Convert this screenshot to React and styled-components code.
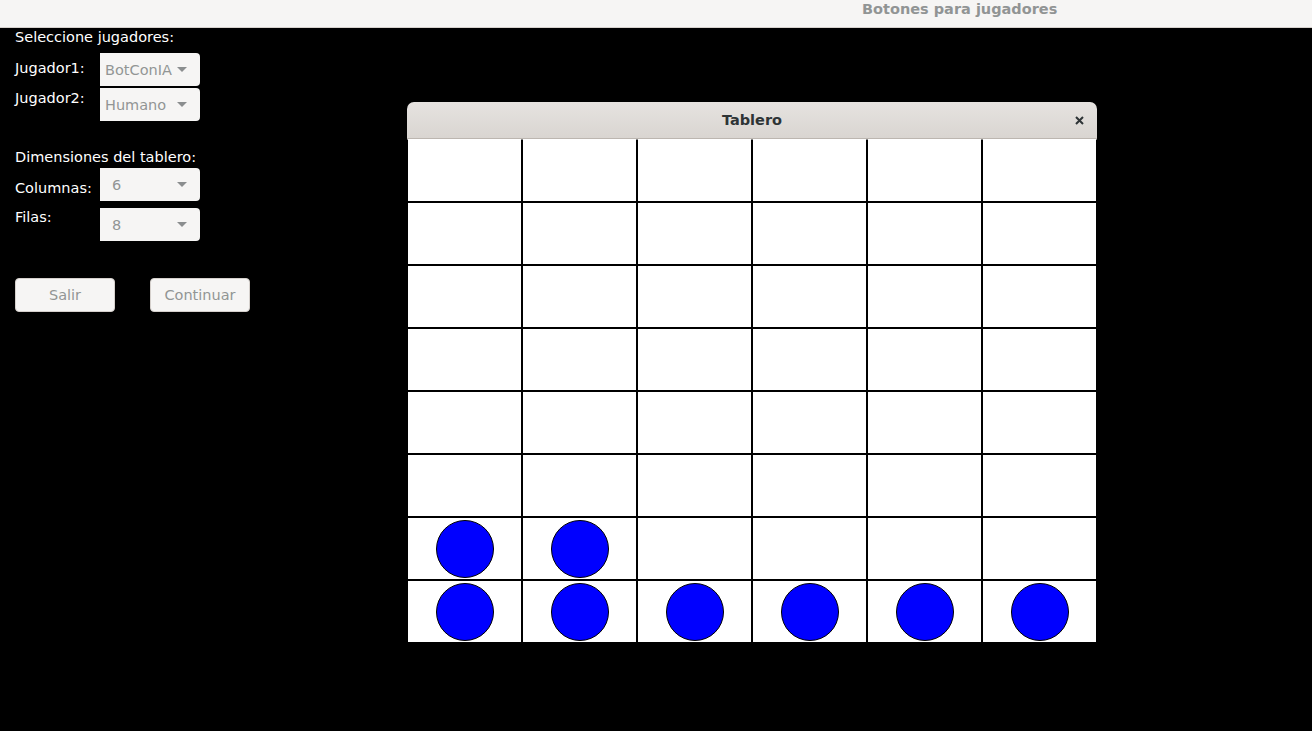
import React from 'react'
import styled, {createGlobalStyle} from 'styled-components'

const GlobalStyle = createGlobalStyle`
    html, body {
        margin: 0;
        padding: 0;
        background: #000;
    }
    body {
        font-family: "DejaVu Sans", "Liberation Sans", sans-serif;
        font-size: 14.5px;
    }
`

const Page = styled.div`
    position: relative;
    min-height: 100vh;
    background: #000;
    overflow: hidden;
`

const HeaderBar = styled.div`
    height: 27px;
    background: #f6f5f4;
    border-bottom: 1px solid #d6d1cd;
    padding-left: 862px;
    box-sizing: content-box;
`

const HeaderTitle = styled.div`
    font-weight: bold;
    color: #919494;
    line-height: 18px;
    white-space: nowrap;
`

const Content = styled.div`
    padding: 0 15px;
`

const Form = styled.div`
    display: grid;
    grid-template-columns: 85px 100px;
    align-items: start;
`

const Column = styled.div`
    display: flex;
    flex-direction: column;
`

const Label = styled.div`
    color: #fff;
    line-height: 18px;
    height: 18px;
    white-space: nowrap;
    margin-top: ${(props) => props.$gap || 0}px;
`

const Combo = styled.div`
    height: 33px;
    width: 100px;
    margin-top: ${(props) => props.$gap || 0}px;
    padding: 0 13px 0 ${(props) => props.$inset}px;
    box-sizing: border-box;
    background: #f6f5f4;
    border-radius: 0 4px 4px 0;
    display: flex;
    align-items: center;
    justify-content: space-between;
    color: #929595;
    white-space: nowrap;
`

const Arrow = styled.span`
    width: 0;
    height: 0;
    border-left: 5px solid transparent;
    border-right: 5px solid transparent;
    border-top: 5px solid #8b8e8f;
    flex-shrink: 0;
`

const ButtonRow = styled.div`
    display: flex;
    gap: 35px;
    margin-top: 37px;
`

const Button = styled.div`
    width: 100px;
    height: 34px;
    box-sizing: border-box;
    background: #f6f5f4;
    border: 1px solid #d5d0cc;
    border-radius: 4px;
    color: #929595;
    display: flex;
    align-items: center;
    justify-content: center;
`

// floating dialog window on the desktop
const Window = styled.div`
    position: absolute;
    left: 407px;
    top: 102px;
    width: 690px;
`

const TitleBar = styled.div`
    height: 36px;
    border-bottom: 1px solid #bcb6b0;
    border-radius: 7px 7px 0 0;
    background: linear-gradient(#e6e3e0, #d9d5d1);
    display: grid;
    grid-template-columns: 40px 1fr 40px;
    align-items: center;
    color: #2e3436;
`

const TitleText = styled.div`
    grid-column: 2;
    text-align: center;
    font-weight: bold;
`

const CloseButton = styled.div`
    display: flex;
    justify-content: flex-end;
    padding-right: 13px;
`

const Board = styled.div`
    display: grid;
    grid-template-columns: repeat(6, 115px);
    grid-template-rows: repeat(8, 63px);
    background: #fff;

    & > div:nth-child(-n+6) {
        border-top-color: #fff;
    }
`

const Cell = styled.div`
    border: 1px solid #000;
    box-sizing: border-box;
    display: flex;
    align-items: center;
    justify-content: center;
`

const Piece = styled.div`
    width: 58px;
    height: 58px;
    border-radius: 50%;
    background: #0000ff;
    border: 1px solid #000;
    box-sizing: border-box;
`

const COLS = 6
const ROWS = 8
const pieces = {
    '6-0': true, '6-1': true,
    '7-0': true, '7-1': true, '7-2': true, '7-3': true, '7-4': true, '7-5': true,
}

export default function App() {
    const cells = []
    for (let r = 0; r < ROWS; r++) {
        for (let c = 0; c < COLS; c++) {
            cells.push(
                <Cell key={`${r}-${c}`}>
                    {pieces[`${r}-${c}`] && <Piece />}
                </Cell>
            )
        }
    }

    return (
        <Page>
            <GlobalStyle />
            <HeaderBar>
                <HeaderTitle>Botones para jugadores</HeaderTitle>
            </HeaderBar>
            <Content>
                <Form>
                    <Column>
                        <Label>Seleccione jugadores:</Label>
                        <Label $gap={13}>Jugador1:</Label>
                        <Label $gap={12}>Jugador2:</Label>
                        <Label $gap={41}>Dimensiones del tablero:</Label>
                        <Label $gap={13}>Columnas:</Label>
                        <Label $gap={11}>Filas:</Label>
                    </Column>
                    <Column>
                        <Combo $gap={25} $inset={5}>BotConIA<Arrow /></Combo>
                        <Combo $gap={2} $inset={5}>Humano<Arrow /></Combo>
                        <Combo $gap={47} $inset={12}>6<Arrow /></Combo>
                        <Combo $gap={7} $inset={12}>8<Arrow /></Combo>
                    </Column>
                </Form>
                <ButtonRow>
                    <Button>Salir</Button>
                    <Button>Continuar</Button>
                </ButtonRow>
            </Content>
            <Window>
                <TitleBar>
                    <TitleText>Tablero</TitleText>
                    <CloseButton>
                        <svg width="9" height="9" viewBox="0 0 9 9">
                            <path d="M1 1 L8 8 M8 1 L1 8" stroke="#2e3436" strokeWidth="2" />
                        </svg>
                    </CloseButton>
                </TitleBar>
                <Board>{cells}</Board>
            </Window>
        </Page>
    )
}
